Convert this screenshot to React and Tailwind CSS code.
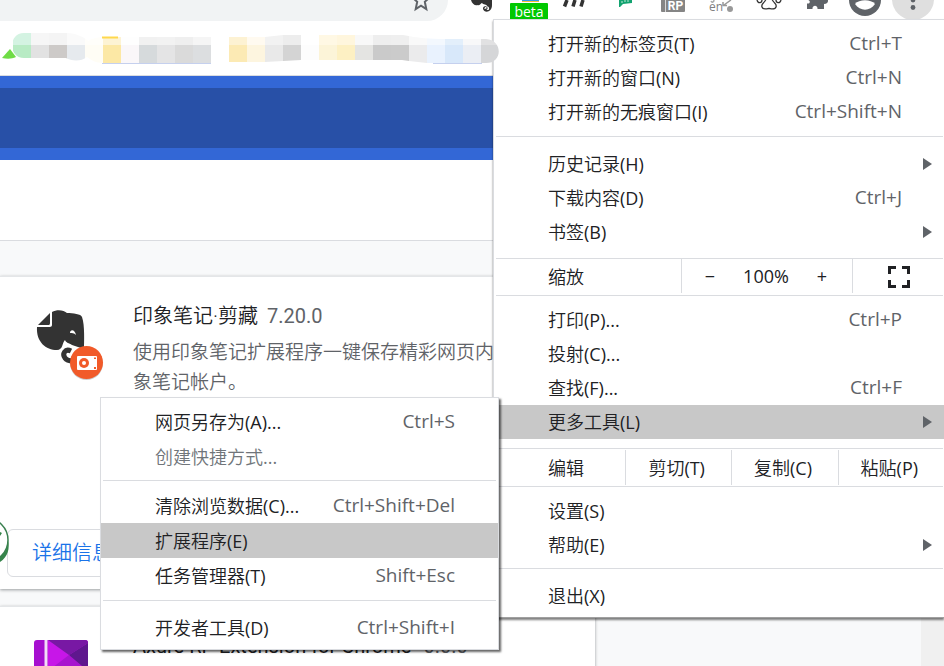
import { clsx } from 'clsx';

const mosaic = [
  [13, '#d4f3e2', '#b8ebc4'], [31, '#f6f6f6', '#e2e2e2'], [49, '#f4f4f4', '#cdcac8'], [67, '#fafafa', '#e6eaee'],
  [85, '#fffefa', '#fffdf5'], [103, '#fdf3d4', '#fce8a5'], [121, '#fefefe', '#faf7f9'], [139, '#f1f1f1', '#d6dadc'],
  [157, '#f2f2f2', '#e4e4e5'], [175, '#efefef', '#dadada'], [193, '#f5f5f5', '#dcdee0'],
  [229, '#fdf2d3', '#fceab4'], [247, '#fffaf0', '#fdf5df'], [265, '#f2f2f2', '#e9e9e9'], [283, '#ededed', '#d4d4d4'],
  [301, '#ffffff', '#fdfdfd'], [319, '#fff8e4', '#fcf4d8'], [337, '#fff6dd', '#fdf0c3'], [355, '#f8f8f8', '#e4e4e2'],
  [373, '#eeeeee', '#cacaca'], [391, '#efefef', '#cbcbcb'], [409, '#f9f9f9', '#ebebec'], [427, '#f3f8fe', '#e9f2fe'],
  [445, '#e3effb', '#d8e8fa'], [463, '#f8f8f9', '#ebeef4'], [481, '#e1e1e2', '#d5d6d8'],
];

const sections = {
  tabs: [
    { label: '打开新的标签页(T)', keys: 'Ctrl+T' },
    { label: '打开新的窗口(N)', keys: 'Ctrl+N' },
    { label: '打开新的无痕窗口(I)', keys: 'Ctrl+Shift+N' },
  ],
  library: [
    { label: '历史记录(H)', arrow: true },
    { label: '下载内容(D)', keys: 'Ctrl+J' },
    { label: '书签(B)', arrow: true },
  ],
  page: [
    { label: '打印(P)...', keys: 'Ctrl+P' },
    { label: '投射(C)...' },
    { label: '查找(F)...', keys: 'Ctrl+F' },
    { label: '更多工具(L)', arrow: true, active: true },
  ],
  settings: [{ label: '设置(S)' }, { label: '帮助(E)', arrow: true }],
  exit: [{ label: '退出(X)' }],
};

const tools = {
  save: [
    { label: '网页另存为(A)...', keys: 'Ctrl+S' },
    { label: '创建快捷方式...', disabled: true },
  ],
  manage: [
    { label: '清除浏览数据(C)...', keys: 'Ctrl+Shift+Del' },
    { label: '扩展程序(E)', active: true },
    { label: '任务管理器(T)', keys: 'Shift+Esc' },
  ],
  dev: [{ label: '开发者工具(D)', keys: 'Ctrl+Shift+I' }],
};

function Arrow() {
  return (
    <svg width="9" height="12" viewBox="0 0 9 12" className="ml-[21px]">
      <path d="M0 0L9 6L0 12Z" fill="#5f6368" />
    </svg>
  );
}

// the access key is set in the regular weight, the name before it a little lighter
function Label({ text }) {
  const at = text.search(/[(.]/);
  return (
    <span>
      {text.slice(0, at)}
      <span className="font-normal">{text.slice(at)}</span>
    </span>
  );
}

function Items({ items, sub, className }) {
  return (
    <div className={className}>
      {items.map((item) => (
        <button
          key={item.label}
          role="menuitem"
          disabled={item.disabled}
          className={clsx(
            'flex w-full items-center pl-[54px] text-left',
            sub ? 'h-[35px]' : 'h-[34px]',
            item.active && 'bg-[#c8c8c8]',
            item.disabled ? 'text-[#70757a]' : 'text-[#202124]',
          )}
        >
          <Label text={item.label} />
          <span className="ml-auto text-[19px] font-normal text-[#5f6368]">{item.keys}</span>
          <span className={sub ? 'w-[43px]' : 'w-[42px]'}>{item.arrow && <Arrow />}</span>
        </button>
      ))}
    </div>
  );
}

function Rule({ className }) {
  return <div role="separator" className={clsx('h-px bg-[#dadce0]', className)} />;
}

function MainMenu() {
  return (
    <div
      role="menu"
      className="absolute top-[19px] right-0 z-10 w-[451px] border border-r-0 border-[#dadce0] border-b-[#a0a0a0] bg-white shadow-[0_2px_2px_rgba(0,0,0,0.5)]"
    >
      <Items items={sections.tabs} className="py-[7px]" />
      <Rule className="mr-px ml-[2px]" />
      <Items items={sections.library} className="pt-[10px] pb-[9px]" />
      <Rule className="mr-px ml-[2px]" />
      <div className="flex h-[36px] items-stretch pb-[2px] pl-[54px]">
        <span className="flex w-[133px] items-center pt-[2px]">缩放</span>
        <div className="flex w-[172px] items-center border-x border-[#dadce0] font-normal">
          <button aria-label="缩小" className="w-[56px]">−</button>
          <span className="w-[56px] text-center">100%</span>
          <button aria-label="放大" className="w-[56px]">+</button>
        </div>
        <button aria-label="全屏" className="flex flex-1 items-center justify-center pt-[2px]">
          <svg width="22" height="22" viewBox="0 0 22 22" fill="none" stroke="#202124" strokeWidth="3">
            <path d="M1.5 8V1.5H8M14 1.5H20.5V8M20.5 14V20.5H14M8 20.5H1.5V14" />
          </svg>
        </button>
      </div>
      <Rule className="mr-px ml-[2px]" />
      <Items items={sections.page} className="pt-[7px] pb-[9px]" />
      <Rule className="mr-px ml-[2px]" />
      <div className="flex h-[37px] items-stretch py-px pl-[54px]">
        <span className="flex w-[77px] items-center">编辑</span>
        {['剪切(T)', '复制(C)', '粘贴(P)'].map((text) => (
          <button key={text} className="flex-1 border-l border-[#dadce0] pr-1">
            <Label text={text} />
          </button>
        ))}
      </div>
      <Rule className="mr-px ml-[2px]" />
      <Items items={sections.settings} className="pt-[7px] pb-[6px]" />
      <Rule className="mr-px ml-[2px]" />
      <Items items={sections.exit} className="pt-[10px] pb-1" />
    </div>
  );
}

function ToolsMenu() {
  return (
    <div
      role="menu"
      className="absolute top-[397px] left-[100px] z-20 w-[399px] border border-[#dadce0] bg-white shadow-[2px_2px_2px_rgba(0,0,0,0.6)]"
    >
      <Items sub items={tools.save} className="py-[6px]" />
      <Rule className="mx-[2px]" />
      <Items sub items={tools.manage} className="py-[7px]" />
      <Rule className="mx-[2px]" />
      <Items sub items={tools.dev} className="pt-[9px] pb-1" />
    </div>
  );
}

function ToolButton({ label, children }) {
  return (
    <button aria-label={label} className="h-[21px] w-12">
      <svg width="48" height="21" viewBox="0 0 48 21" className="block">{children}</svg>
    </button>
  );
}

function Toolbar() {
  return (
    <div className="flex h-[21px] shrink-0 overflow-hidden bg-white pr-[7px]">
      <div className="mr-[9px] flex flex-1 justify-end rounded-br-[21px] bg-[#f1f3f4] pr-4">
        <button aria-label="收藏" className="h-[21px]">
          <svg width="22" height="21" viewBox="0 0 22 21" fill="none" stroke="#5f6368" strokeWidth="2" className="block">
            <path d="M11 -9L13.4 -2.8L19.5 -2.4L14.8 1.8L16.3 9L11 5.6L5.7 9L7.2 1.8L2.5 -2.4L8.6 -2.8Z" />
          </svg>
        </button>
      </div>
      <ToolButton label="印象笔记">
        <path d="M14 0C15 4 18 6 21 5C23 6 24 3 25 3C26 5 30 4 30 6C28 6 26 6 26 9C27 13 35 13 35 5V0Z" fill="#333" />
        <path d="M28 9C28 6 32 6 31.500 9C31 10 30 9 30 8.500" fill="none" stroke="#fff" strokeWidth="1.200" />
      </ToolButton>
      <ToolButton label="beta">
        <rect x="17" y="0" width="17" height="1" fill="#2f9be8" />
        <rect x="17" y="1" width="17" height="1" fill="#f5b93a" />
        <rect x="5" y="3" width="38" height="17" rx="1" fill="#00c800" />
        <text x="24" y="17" textAnchor="middle" fontSize="14" fontWeight="400" fontFamily="'Open Sans', sans-serif" fill="#fff">beta</text>
      </ToolButton>
      <ToolButton label="m">
        <path d="M11.500 6.500L14 0M20 6.500L22 0M28 6.500L30 0" stroke="#333" strokeWidth="3.500" />
      </ToolButton>
      <ToolButton label="旗标">
        <path d="M18 0H31V3L22 4L19 7H18Z" fill="#12a370" />
        <path d="M21 1V3M24 0V2M27 0V2" stroke="#bfe8d6" />
      </ToolButton>
      <ToolButton label="Axure RP">
        <rect x="12" y="-6" width="24" height="18" rx="1" fill="#858585" />
        <path d="M16.500 0V12" stroke="#d8d8d8" />
        <text x="26.500" y="10" textAnchor="middle" fontSize="12" fontWeight="700" fontFamily="Roboto, sans-serif" fill="#fff">RP</text>
      </ToolButton>
      <ToolButton label="翻译">
        <path d="M14 1C15 3 17 2 17 0" fill="none" stroke="#aaa" strokeWidth="1.500" />
        <text x="12" y="11" fontSize="12" fontWeight="400" fontFamily="'Open Sans', sans-serif" fill="#808080">en</text>
        <path d="M34 0L27 5M26 2V5.500H30" fill="none" stroke="#999" strokeWidth="1.500" />
        <circle cx="33" cy="9" r="3" fill="#999" />
      </ToolButton>
      <ToolButton label="百度">
        <path d="M20 1C18 4 16 4 17 7C18 10 21 9 24 8.500C27 9 30 10 31 7C32 4 30 4 28 1C26 -3 22 -3 20 1Z" fill="none" stroke="#333" strokeWidth="1.300" />
        <path d="M12 0C13 4 17 3 17 0M31 0C31 3 35 4 36 0" fill="none" stroke="#333" strokeWidth="1.300" />
      </ToolButton>
      <ToolButton label="扩展程序">
        <path d="M15 0C18 1 17 4 14 3.500V9H19.500C19 4.500 25 4.500 24.500 9H31V4C36 4 36 -1 33 -2H14Z" fill="#5f6368" />
      </ToolButton>
      <ToolButton label="个人资料">
        <circle cx="24" cy="0" r="16" fill="#5f6368" />
        <path d="M14 4C18 -1 30 -1 34 4C29 11.500 19 11.500 14 4Z" fill="#fff" />
      </ToolButton>
      <ToolButton label="菜单">
        <circle cx="24" cy="-1" r="21" fill="#dfdfdf" />
        <circle cx="24" cy="0" r="2.400" fill="#5f6368" />
        <circle cx="24" cy="7.500" r="2.400" fill="#5f6368" />
      </ToolButton>
    </div>
  );
}

function BookmarksBar() {
  return (
    <div className="h-[55px] shrink-0 border-b border-[#dadce0] bg-white">
      <svg width="500" height="54" viewBox="0 21 500 54" className="relative z-20 block">
        <defs>
          <clipPath id="smudge">
            <path d="M24 33H67C76 33 86 38 88 41C93 38 98 37 103 37H211V63H103C96 63 91 60 87 57C81 62 71 61 66 58H24C8 58 8 33 24 33ZM229 37H265L283 35H301V60L265 62H229ZM301 35H403C418 38 430 39 445 39H486C503 40 503 63 486 63H427L409 61L402 60H301Z" />
          </clipPath>
        </defs>
        <path d="M2 58L10 49L16 57C12 59 7 59 2 58Z" fill="#6fdc45" />
        <g clipPath="url(#smudge)">
          {mosaic.map(([x, top, bottom]) => (
            <g key={x}>
              <rect x={x} y="33" width="18" height="12" fill={top} />
              <rect x={x} y="45" width="18" height="18" fill={bottom} />
            </g>
          ))}
        </g>
        <path d="M102 37.500H118" stroke="#ffd84d" strokeWidth="2" />
        <path d="M102 63.500H211M433 63.500H482" stroke="#c5d0ee" />
      </svg>
    </div>
  );
}

function ElephantIcon() {
  return (
    <svg width="68" height="74" viewBox="36 308 68 74" className="block shrink-0">
      <path d="M38 325L50 313V323C50 325 49 325 48 325Z" fill="#333" />
      <path d="M52 312C57 309 64 310 67 313C73 313 81 314 82 317C85 325 84 343 84 349L72 345C69 343 66 343 65 340C62 343 63 350 57 350C46 350 36 342 37 327H49C52 327 52 326 52 324Z" fill="#333" />
      <path d="M70 333C70 329 75 329 76 335C74 333 72 333 70 333Z" fill="#fff" />
      <path d="M71 351C65 348 62 354 65 358C67 361 70 361 73 361" fill="none" stroke="#333" strokeWidth="5" />
      <circle cx="86.500" cy="363.500" r="16.500" fill="#000" opacity="0.2" />
      <circle cx="86.500" cy="362.500" r="16.500" fill="#f15a29" />
      <rect x="77" y="356" width="20" height="14" rx="1" fill="#fff" />
      <circle cx="84" cy="363" r="5" fill="#f15a29" />
      <circle cx="84" cy="363" r="2" fill="#fff" />
      <path d="M94 357.500H96V359H94ZM94 367H96V369H94Z" fill="#f15a29" />
    </svg>
  );
}

function AxureIcon() {
  return (
    <svg width="54" height="54" viewBox="0 0 54 54" className="block shrink-0">
      <rect width="54" height="54" rx="3" fill="#a60fd0" />
      <path d="M14 0H51Q54 0 54 3V54H14Z" fill="#c716e8" />
      <path d="M14 0H51Q54 0 54 3L35 15Z" fill="#7818a4" />
      <path d="M54 3V54L35 15Z" fill="#5f178e" />
      <path d="M14 31L35 15L54 31V54H14Z" fill="#a814cf" />
      <path d="M12 0V54" stroke="#f2ddf7" strokeWidth="3" />
    </svg>
  );
}

export default function App() {
  return (
    <div className="relative flex h-screen flex-col overflow-hidden bg-[#f8f9fa] font-['Open_Sans','Noto_Sans_CJK_SC',sans-serif] text-lg font-[350] text-[#202124]">
      <Toolbar />
      <BookmarksBar />
      <div className="h-[84px] shrink-0 border-y-[12px] border-[#3367d6] bg-[#2850a7]" />
      <div className="h-[81px] shrink-0 border-b border-[#dadce0] bg-white" />
      <div className="flex flex-1 justify-between font-[Roboto,'Noto_Sans_CJK_SC',sans-serif]">
        <main className="relative w-[595px] pt-[35px]">
          <section className="border-t border-[#e4e6e8] bg-white shadow-[0_1px_3px_rgba(60,64,67,0.5)]">
            <div className="flex h-[252px] gap-[29px] pt-[31px] pl-9">
              <ElephantIcon />
              <div className="-mt-2 w-[430px]">
                <h2 className="flex gap-[9px] text-xl leading-[32px]">
                  <span>印象笔记·剪藏</span>
                  <span className="font-normal text-[#5f6368]">7.20.0</span>
                </h2>
                <p className="pt-[6px] text-[19px] leading-[30px] text-[#5f6368]">
                  使用印象笔记扩展程序一键保存精彩网页内容到印象笔记帐户。
                </p>
              </div>
            </div>
            <div className="pb-3 pl-[7px]">
              <button className="h-12 rounded-md border border-[#dadce0] px-6 text-xl text-[#1a73e8]">详细信息</button>
            </div>
          </section>
          <section className="mt-[17px] h-40 border-t border-[#e4e6e8] bg-white shadow-[0_1px_3px_rgba(60,64,67,0.5)]">
            <div className="flex gap-[45px] pt-[33px] pl-[34px]">
              <AxureIcon />
              <h2 className="-mt-[10px] flex gap-3 text-xl leading-[32px] font-normal">
                <span>Axure RP Extension for Chrome</span>
                <span className="text-[#5f6368]">0.0.0</span>
              </h2>
            </div>
          </section>
          <svg width="10" height="48" viewBox="0 516 10 48" className="absolute top-[275px] left-0">
            <circle cx="-14" cy="540" r="22" fill="#fff" stroke="#3a8050" strokeWidth="1.500" />
            <path d="M0 557C6 552 8 547 8 540C10 548 8 557 0 562Z" fill="#35844a" />
            <path d="M0 532L2 533L0 536Z" fill="#35844a" />
          </svg>
        </main>
        <div className="w-[23px] bg-[#f0f0f0]" />
      </div>
      <MainMenu />
      <ToolsMenu />
    </div>
  );
}
